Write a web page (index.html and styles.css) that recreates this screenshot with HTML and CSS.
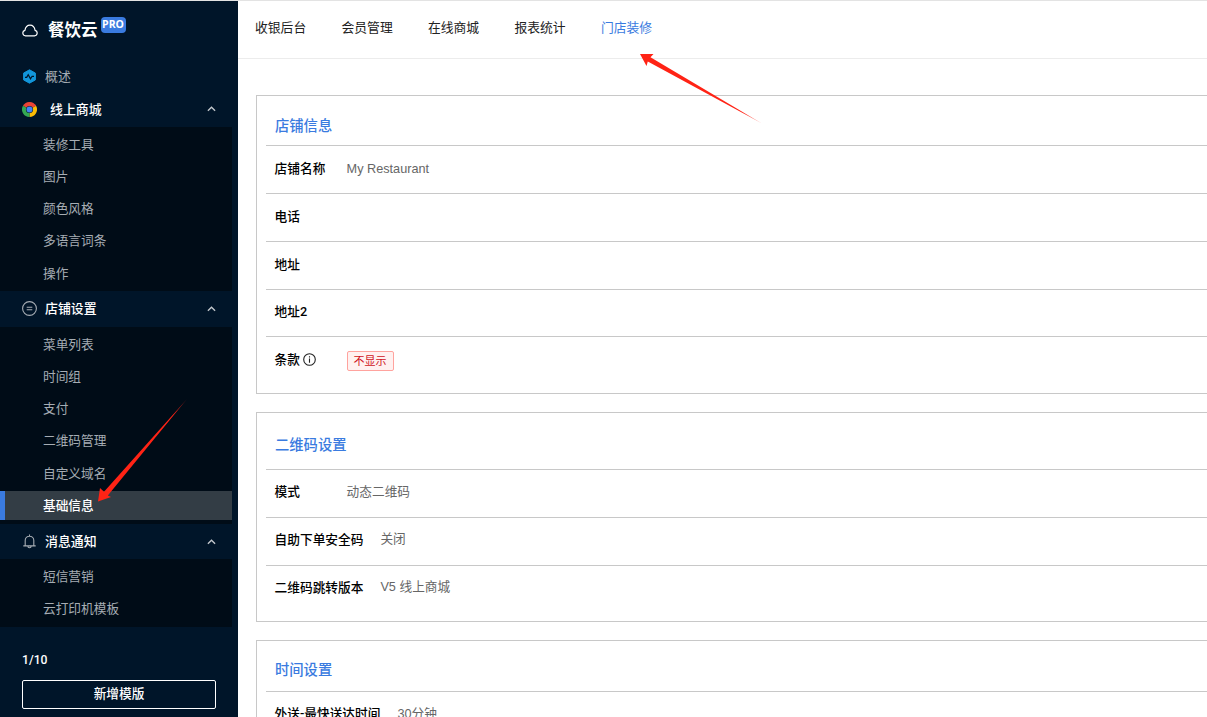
FILE: index.html
```html
<!DOCTYPE html>
<html lang="zh-CN">
<head>
  <meta charset="UTF-8" />
  <meta name="viewport" content="width=device-width, initial-scale=1" />
  <title>餐饮云 - 基础信息</title>
  <link rel="stylesheet" href="styles.css">
</head>
<body>

  <div class="layout">
    <aside class="sidebar">
      <div class="logo">
        <svg class="cloud" viewBox="0 0 16 13" width="16" height="13"><path d="M3.5 11.8h9a2.8 2.8 0 0 0 .6-5.5C12.500 3 10.500 1.200 8 1.200S3.500 3 2.900 6.300a2.800 2.800 0 0 0 .6 5.500z" fill="none" stroke="#fff" stroke-width="1.200"/></svg>
        <span class="brand">餐饮云</span>
        <span class="pro">PRO</span>
      </div>

      <div class="menu-link">
        <svg class="menu-icon" viewBox="0 0 15 15" width="15" height="15"><path d="M7.500.8l5.900 3.300v6.800l-5.900 3.300L1.600 10.900V4.100z" fill="#1296db" stroke="#1296db" stroke-linejoin="round"/><path d="M3 8.300h1.700l1.500-2.500 2.300 4 1.600-2.500H12" fill="none" stroke="#001529" stroke-width="1.200"/></svg>
        <span>概述</span>
      </div>

      <div class="menu-title shop">
        <svg class="menu-icon" viewBox="0 0 16 16" width="15" height="15">
          <path d="M8 8L1.070 4A8 8 0 0 1 14.930 4z" fill="#ea4335"/>
          <path d="M8 8L14.930 4A8 8 0 0 1 8 16z" fill="#fbbc05"/>
          <path d="M8 8v8A8 8 0 0 1 1.070 4z" fill="#34a853"/>
          <path d="M8 4.200h6.980a8 8 0 0 0-.8-1.200H3z" fill="#ea4335"/>
          <circle cx="8" cy="8" r="3.800" fill="#001529"/>
          <circle cx="8" cy="8" r="3.200" fill="#4285f4"/>
        </svg>
        <span>线上商城</span>
        <svg class="arrow" viewBox="0 0 10 6" width="9" height="6"><path d="M1 5l4-4 4 4" fill="none" stroke="currentColor" stroke-width="1.500"/></svg>
      </div>
      <ul class="submenu">
        <li>装修工具</li>
        <li>图片</li>
        <li>颜色风格</li>
        <li>多语言词条</li>
        <li>操作</li>
      </ul>

      <div class="menu-title">
        <svg class="menu-icon" viewBox="0 0 15 15" width="15" height="15"><circle cx="7.500" cy="7.500" r="6.900" fill="none" stroke="#a6adb4" stroke-width="1.100"/><path d="M4.700 6.300h5.600M4.700 8.700h5.600" stroke="#a6adb4" stroke-width="1.100"/></svg>
        <span>店铺设置</span>
        <svg class="arrow" viewBox="0 0 10 6" width="9" height="6"><path d="M1 5l4-4 4 4" fill="none" stroke="currentColor" stroke-width="1.500"/></svg>
      </div>
      <ul class="submenu settings">
        <li>菜单列表</li>
        <li>时间组</li>
        <li>支付</li>
        <li>二维码管理</li>
        <li>自定义域名</li>
        <li class="active">基础信息</li>
      </ul>

      <div class="menu-title notice">
        <svg class="menu-icon" viewBox="0 0 15 15" width="15" height="15"><path d="M3.200 11.700V6.500a4.300 4.300 0 0 1 8.600 0v5.200M1.300 11.900h12.400M7.500 2.200V.6M5.900 12.200a1.600 1.600 0 0 0 3.200 0" fill="none" stroke="#a6adb4" stroke-width="1.100"/></svg>
        <span>消息通知</span>
        <svg class="arrow" viewBox="0 0 10 6" width="9" height="6"><path d="M1 5l4-4 4 4" fill="none" stroke="currentColor" stroke-width="1.500"/></svg>
      </div>
      <ul class="submenu">
        <li>短信营销</li>
        <li>云打印机模板</li>
      </ul>

      <div class="count">1/10</div>
      <button class="add-button">新增模版</button>
    </aside>

    <main class="main">
      <nav class="top-nav">
        <a>收银后台</a>
        <a>会员管理</a>
        <a>在线商城</a>
        <a>报表统计</a>
        <a class="current">门店装修</a>
      </nav>

      <div class="content">
        <section class="card shop-card">
          <h3>店铺信息</h3>
          <div class="row"><label>店铺名称</label><span class="value">My Restaurant</span></div>
          <div class="row"><label>电话</label></div>
          <div class="row"><label>地址</label></div>
          <div class="row"><label>地址2</label></div>
          <div class="row">
            <label>条款
              <svg class="info" viewBox="0 0 13 13" width="13" height="13"><circle cx="6.500" cy="6.500" r="5.800" fill="none" stroke="#222" stroke-width="1.100"/><path d="M6.500 5.500v4.200M6.500 3.200v1.300" stroke="#222" stroke-width="1.100"/></svg>
            </label>
            <span class="tag">不显示</span>
          </div>
        </section>

        <section class="card qr-card">
          <h3>二维码设置</h3>
          <div class="row"><label>模式</label><span class="value">动态二维码</span></div>
          <div class="row"><label>自助下单安全码</label><span class="value">关闭</span></div>
          <div class="row"><label>二维码跳转版本</label><span class="value">V5 线上商城</span></div>
        </section>

        <section class="card time-card">
          <h3>时间设置</h3>
          <div class="row"><label>外送-最快送达时间</label><span class="value">30分钟</span></div>
        </section>
      </div>
    </main>
  </div>

  <!-- pointers to the active tab and menu item -->
  <svg class="pointers" viewBox="0 0 1207 717" width="1207" height="717">
    <defs>
      <linearGradient id="fadeTop" gradientUnits="userSpaceOnUse" x1="640" y1="54" x2="760" y2="123">
        <stop offset="0.850" stop-color="#ff2315"/><stop offset="1" stop-color="#ff2315" stop-opacity="0.500"/>
      </linearGradient>
      <linearGradient id="fadeSide" gradientUnits="userSpaceOnUse" x1="98" y1="501" x2="186" y2="400">
        <stop offset="0.850" stop-color="#ff2315"/><stop offset="1" stop-color="#ff2315" stop-opacity="0.500"/>
      </linearGradient>
    </defs>
    <path d="M640 54L653.500 54L650.500 57.200L762 123.500L647.800 61.500L646.500 66z" fill="url(#fadeTop)"/>
    <path d="M98 501.500L100 488L104 491.800L187 399L107.800 495.500L111 497z" fill="url(#fadeSide)"/>
  </svg>

</body>
</html>
```

FILE: styles.css
```css
* {
  box-sizing: border-box;
}

body {
  margin: 0;
  height: 717px;
  overflow: hidden;
  background-color: #fff;
  font-family: "Liberation Sans", "Noto Sans CJK SC", sans-serif;
  font-size: 12.7px;
  color: #000;
}

.layout {
  display: flex;
  height: 717px;
  overflow: hidden;
  border-top: 1px solid #e3e3e3;
}

.sidebar {
  width: 238px;
  flex: none;
  background-color: #001529;
  color: #fff;
}

.logo {
  display: flex;
  align-items: center;
  height: 58px;
  padding-left: 22px;
}

.brand {
  margin: -3px 0 0 10px;
  font-size: 16.500px;
  font-weight: bold;
}

.pro {
  width: 25px;
  height: 16px;
  margin: -11px 0 0 3px;
  border-radius: 4px;
  background-color: #3a7be0;
  font-family: "Open Sans", sans-serif;
  font-size: 10.500px;
  font-weight: bold;
  line-height: 15px;
  text-align: center;
}

.menu-link,
.menu-title {
  display: flex;
  align-items: center;
  width: 232px;
  padding-left: 22px;
  font-size: 12.900px;
}

.menu-link {
  height: 34px;
  color: #a6adb4;
}

.menu-link span,
.menu-title span {
  margin-top: -2px;
}

.menu-title {
  height: 36px;
  font-weight: 500;
}

.menu-title.shop {
  height: 34px;
  padding-bottom: 2px;
}

.menu-title.notice {
  height: 35px;
}

.menu-icon {
  flex: none;
  margin-right: 8px;
}

.shop .menu-icon {
  margin-right: 13px;
}

.arrow {
  margin-left: auto;
  margin-right: 16px;
  color: #c3c8cd;
}

.submenu {
  width: 232px;
  margin: 0;
  padding: 2.600px 0 3.400px;
  list-style: none;
  background-color: #000c17;
  color: #a6adb4;
}

.submenu.settings {
  padding-bottom: 4.200px;
}

.submenu li {
  height: 28.800px;
  margin-bottom: 3.500px;
  padding-left: 43px;
  line-height: 31px;
}

.submenu li:last-child {
  margin-bottom: 0;
}

.notice + .submenu {
  padding: 2.900px 0 4.100px;
}

.submenu .active {
  padding-left: 38px;
  border-left: 5px solid #3a7be0;
  background-color: #333d45;
  color: #fff;
  font-weight: 500;
}

.count {
  margin: 26px 0 0 22px;
  font-family: Roboto, sans-serif;
  font-size: 12.200px;
  font-weight: 500;
  line-height: 15px;
}

.add-button {
  display: block;
  width: 194px;
  height: 29px;
  margin: 12px 0 0 22px;
  padding: 0 0 4px;
  border: 1px solid #fff;
  border-radius: 2px;
  background: none;
  color: #fff;
  font: inherit;
  font-weight: 500;
}

.main {
  flex: 1;
  min-width: 0;
}

.top-nav {
  display: flex;
  gap: 35.300px;
  height: 58px;
  padding: 17px 0 0 17px;
  border-bottom: 1px solid #ececec;
  font-size: 12.800px;
  line-height: 19px;
  color: #222;
}

.top-nav .current {
  color: #3a7be0;
}

.content {
  padding: 36px 0 0 18px;
}

.card {
  margin-bottom: 18px;
  padding-left: 9px;
  border: 1px solid #c8c8c8;
  border-right: none;
}

.shop-card {
  height: 299px;
}

.qr-card {
  height: 210px;
}

.time-card {
  height: 210px;
}

.card h3 {
  height: 49.300px;
  margin: 0;
  padding: 19px 0 0 9px;
  color: #3a7be0;
  font-size: 14.300px;
  font-weight: 500;
  line-height: 22px;
}

.qr-card h3 {
  height: 56px;
  padding-top: 21px;
}

.time-card h3 {
  height: 50px;
  padding-top: 18px;
}

.row {
  display: flex;
  height: 47.800px;
  padding: 13px 0 0 8.600px;
  border-top: 1px solid #c8c8c8;
  line-height: 19px;
}

.shop-card .row {
  padding-top: 13.800px;
}

.row label {
  min-width: 72px;
  margin-top: -1px;
  padding-right: 17px;
  font-family: Roboto, "Noto Sans CJK SC", sans-serif;
  font-weight: 500;
}

.row .value {
  color: #666;
}

.qr-card .row + .row .value {
  margin-top: -1px;
}

.info {
  vertical-align: -2px;
}

.tag {
  width: 47px;
  height: 20px;
  border: 1px solid #ffa39e;
  border-radius: 2px;
  background-color: #fff1f0;
  color: #cf1322;
  font-size: 11px;
  line-height: 18px;
  text-align: center;
}

.pointers {
  position: absolute;
  top: 0;
  left: 0;
  pointer-events: none;
}
```
